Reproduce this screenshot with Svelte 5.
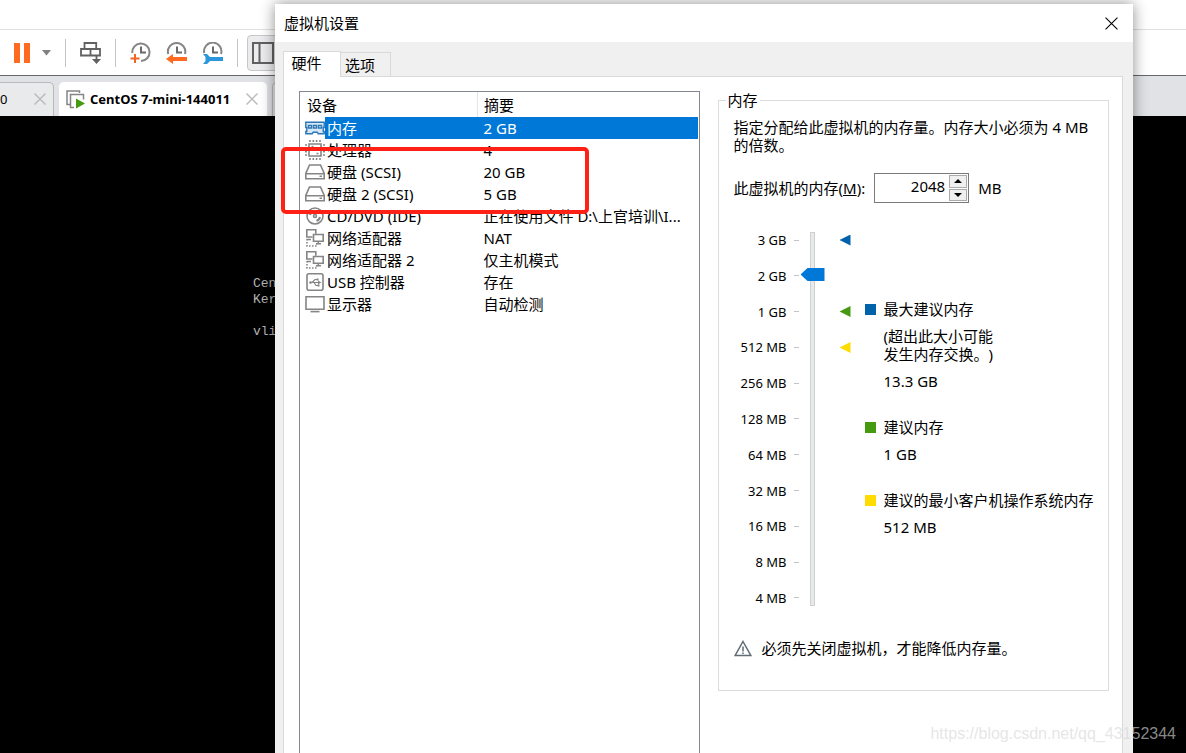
<script>
    const devices = [
        { icon: 'memory', name: '内存', summary: '2 GB' },
        { icon: 'cpu', name: '处理器', summary: '4' },
        { icon: 'disk', name: '硬盘 (SCSI)', summary: '20 GB' },
        { icon: 'disk', name: '硬盘 2 (SCSI)', summary: '5 GB' },
        { icon: 'cd', name: 'CD/DVD (IDE)', summary: '正在使用文件 D:\\上官培训\\I...' },
        { icon: 'network', name: '网络适配器', summary: 'NAT' },
        { icon: 'network', name: '网络适配器 2', summary: '仅主机模式' },
        { icon: 'usb', name: 'USB 控制器', summary: '存在' },
        { icon: 'display', name: '显示器', summary: '自动检测' }
    ];

    const scale = [
        { label: '3 GB', marker: 'blue' },
        { label: '2 GB' },
        { label: '1 GB', marker: 'green' },
        { label: '512 MB', marker: 'yellow' },
        { label: '256 MB' },
        { label: '128 MB' },
        { label: '64 MB' },
        { label: '32 MB' },
        { label: '16 MB' },
        { label: '8 MB' },
        { label: '4 MB' }
    ];

    let selected = $state(0);
    let memory = $state(2048);
    let level = $state(9);

    function step(amount) {
        memory = Math.max(4, memory + amount);
    }
</script>

{#snippet cross(size, stroke, width)}
    <svg width={size} height={size} viewBox="0 0 12 12" fill="none" stroke={stroke} stroke-width={width}>
        <path d="M.5 .5l11 11M11.5 .5l-11 11" />
    </svg>
{/snippet}

{#snippet clock(ring)}
    <path d={ring} stroke="#858585" stroke-width="2" fill="none" />
    <path d="M11 4.500v6h5" stroke="#6a6a6a" stroke-width="2" fill="none" />
{/snippet}

{#snippet deviceIcon(kind)}
    <svg width="20" height="20" viewBox="0 0 20 20" fill="none" stroke="#858585" stroke-width="1.600">
        {#if kind === 'memory'}
            <g stroke="#2d75b3" stroke-width="1.400">
                <path d="M.8 4.300h18.400v5.200h-1v4h1v2.200h-6l-1-1.500h-4l-1 1.500H.8v-2.200h1v-4h-1z" fill="#d5e8f7" />
                <path d="M3.500 7.500h3v2.500h-3zM8.500 7.500h3v2.500h-3zM13.500 7.500h3v2.500h-3z" fill="#fff" />
            </g>
        {:else if kind === 'cpu'}
            <path d="M4 4h12v12H4z" />
            <path d="M6.500 6.500h2M11.500 13.500h2" />
            <path d="M5 2V0M8.300 2V0M11.600 2V0M15 2V0M5 20v-2M8.300 20v-2M11.600 20v-2M15 20v-2M2 5H0M2 8.300H0M2 11.600H0M2 15H0M20 5h-2M20 8.300h-2M20 11.600h-2M20 15h-2" />
        {:else if kind === 'disk'}
            <path d="M4.500 3h11l3.700 8.500v5.200H.8v-5.200z" />
            <path d="M1 11.700h18M14.500 14.200h2.500" />
        {:else if kind === 'cd'}
            <circle cx="10" cy="10" r="8" />
            <circle cx="10" cy="10" r="1.500" />
            <path d="M5 9a5 5 0 0 1 3.500-3.800M15 11a5 5 0 0 1-3.500 3.800" stroke-width="2" />
        {:else if kind === 'network'}
            <path d="M7.500 9H1.800V1.800h9v4" />
            <path d="M8.500 6.500h9.700v6.700H8.500zM11 15.800h5M13.300 13.500v2M2 11.500h4" />
            <path d="M2 11v7h9.500v-2" stroke-dasharray="1.500 1.500" />
        {:else if kind === 'usb'}
            <rect x="2" y="1.800" width="16" height="16.400" rx="2" />
            <path d="M5 10.500h10M7 10.500l3-3h2M9 10.500l2 3h2" stroke-width="1.200" />
            <circle cx="5.500" cy="10.500" r="1.300" fill="#858585" stroke="none" />
            <path d="M13 8.500l3.300 2-3.300 2zM11.500 6.500h2v2h-2zM12.500 12.500h2v2h-2z" fill="#858585" stroke="none" />
        {:else}
            <path d="M1 2.800h18v12.400H1z" />
            <path d="M5.500 17.600h9" />
        {/if}
    </svg>
{/snippet}

<div class="desktop">
    <div class="menu-strip"></div>

    <div class="toolbar">
        <div class="power">
            <button aria-label="暂停">
                <svg width="16" height="20" viewBox="0 0 16 20"><path d="M0 0h6v20H0zM10 0h6v20h-6z" fill="#ff6a21" /></svg>
            </button>
            <button aria-label="电源选项">
                <svg width="9" height="6" viewBox="0 0 9 6"><path d="M0 0h9L4.500 5.500z" fill="#808080" /></svg>
            </button>
        </div>
        <span class="divider"></span>
        <button aria-label="发送按键">
            <svg width="21" height="22" viewBox="0 0 21 22" fill="none" stroke="#616161" stroke-width="1.800">
                <path d="M4.500 6.500V1h11.700v5.500M1 7h19v6.500H1zM10.500 7v6.500" />
                <path d="M16.500 13v6" />
                <path d="M12 17h9l-4.500 5z" fill="#616161" stroke="none" />
            </svg>
        </button>
        <span class="divider"></span>
        <div class="snapshots">
            <button aria-label="拍摄快照">
                <svg width="21" height="22" viewBox="0 0 21 22">
                    {@render clock('M2.200 11A8.700 8.700 0 1 1 11 19')}
                    <path d="M5 12v9M.5 16.500h9" stroke="#f26522" stroke-width="2" />
                </svg>
            </button>
            <button aria-label="恢复快照">
                <svg width="21" height="22" viewBox="0 0 21 22">
                    {@render clock('M2.200 12A8.700 8.700 0 1 1 19 12')}
                    <path d="M0 17l7-5v3h14v4H7v3z" fill="#ff6a21" />
                </svg>
            </button>
            <button aria-label="管理快照">
                <svg width="21" height="22" viewBox="0 0 21 22">
                    {@render clock('M2.200 11A8.700 8.700 0 1 1 19 12')}
                    <path d="M1 12h4l3 3h13v4H8l-3 3H1l2.500-3v-4z" fill="#2b96dc" />
                </svg>
            </button>
        </div>
        <span class="divider"></span>
        <button class="pressed" aria-label="显示库">
            <svg width="22" height="22" viewBox="0 0 22 22" fill="none" stroke="#616161" stroke-width="2">
                <path d="M1 1h20v20H1zM7.500 1v20" />
            </svg>
        </button>
    </div>

    <div class="vm-tabs">
        <div class="vm-tab first">
            <span>0</span>
            <button aria-label="关闭">{@render cross(12, '#bcbcbc', 1.5)}</button>
        </div>
        <div class="vm-tab active">
            <svg width="19" height="19" viewBox="0 0 19 19" fill="none" stroke="#858585" stroke-width="1.500">
                <path d="M4 14.500H1V1h12.500v2" />
                <path d="M8 17.500H4.500v-13h13v5" />
                <path d="M10 8.500l9 5-9 5z" fill="#459a12" stroke="none" />
            </svg>
            <strong>CentOS 7-mini-144011</strong>
            <button aria-label="关闭">{@render cross(12, '#bcbcbc', 1.5)}</button>
        </div>
        <div class="vm-tab next"></div>
    </div>

    <pre class="console">Cen
Ker

vli</pre>

    <div class="dialog" role="dialog" aria-labelledby="dialog-title">
        <header>
            <h1 id="dialog-title">虚拟机设置</h1>
            <button aria-label="关闭">{@render cross(13, '#000', 1)}</button>
        </header>

        <div class="tabs" role="tablist">
            <button class="tab current" role="tab" aria-selected="true">硬件</button>
            <button class="tab" role="tab" aria-selected="false">选项</button>
        </div>

        <div class="page">
            <div class="device-list">
                <table>
                    <thead>
                        <tr><th class="device-col">设备</th><th>摘要</th></tr>
                    </thead>
                    <tbody>
                        {#each devices as device, i}
                            <tr class:selected={i === selected} onclick={() => (selected = i)}>
                                <td>
                                    <div class="device">
                                        {@render deviceIcon(device.icon)}
                                        <span class="device-name">{device.name}</span>
                                    </div>
                                </td>
                                <td class="summary">{device.summary}</td>
                            </tr>
                        {/each}
                    </tbody>
                </table>
                <div class="highlight"></div>
            </div>

            <fieldset>
                <legend>内存</legend>
                <p>指定分配给此虚拟机的内存量。内存大小必须为 4 MB 的倍数。</p>

                <div class="memory-row">
                    <label for="memory">此虚拟机的内存(<u>M</u>):</label>
                    <div class="spinner">
                        <input id="memory" type="text" inputmode="numeric" bind:value={memory} />
                        <div class="spin-buttons">
                            <button aria-label="增加" onclick={() => step(4)}>
                                <svg width="8" height="4" viewBox="0 0 8 4"><path d="M0 4l4-4 4 4z" /></svg>
                            </button>
                            <button aria-label="减少" onclick={() => step(-4)}>
                                <svg width="8" height="4" viewBox="0 0 8 4"><path d="M0 0l4 4 4-4z" /></svg>
                            </button>
                        </div>
                    </div>
                    <span>MB</span>
                </div>

                <div class="memory-scale">
                    <div class="labels">
                        {#each scale as mark}
                            <span class="mark">{mark.label}</span>
                        {/each}
                    </div>
                    <input class="slider" type="range" min="0" max="10" bind:value={level} aria-label="内存" />
                    <div class="markers">
                        {#each scale as mark}
                            <span class="marker {mark.marker ?? ''}"></span>
                        {/each}
                    </div>
                    <dl>
                        <dt class="blue">最大建议内存</dt>
                        <dd>(超出此大小可能<br />发生内存交换。)</dd>
                        <dd>13.3 GB</dd>
                        <dt class="green">建议内存</dt>
                        <dd>1 GB</dd>
                        <dt class="yellow">建议的最小客户机操作系统内存</dt>
                        <dd>512 MB</dd>
                    </dl>
                </div>

                <div class="note">
                    <svg width="18" height="17" viewBox="0 0 18 17" fill="none" stroke="#5f6b76" stroke-width="1.500">
                        <path d="M9 1.500L16.800 15.500H1.200z" />
                        <path d="M9 6.500v5M9 12.500v1.500" />
                    </svg>
                    <span>必须先关闭虚拟机，才能降低内存量。</span>
                </div>
            </fieldset>
        </div>
    </div>

    <div class="watermark">https://blog.csdn.net/qq_43152344</div>
</div>

<style>
    :global(body) {
        margin: 0;
    }

    .desktop {
        position: relative;
        display: flex;
        flex-direction: column;
        height: 100vh;
        overflow: hidden;
        background: #000;
        color: #000;
        font: 15px/18px "Noto Sans", "Noto Sans CJK SC", sans-serif;
        text-spacing-trim: space-all;
    }

    button {
        display: flex;
        align-items: center;
        justify-content: center;
        padding: 0;
        border: 0;
        background: none;
        color: inherit;
        font: inherit;
    }

    svg {
        display: block;
        flex-shrink: 0;
    }

    .menu-strip {
        height: 29px;
        border-bottom: 1px solid #e0e0e0;
        background: #fff;
    }

    .toolbar {
        display: flex;
        align-items: center;
        gap: 14px;
        height: 45px;
        padding-left: 14px;
        border-bottom: 1px solid #68666c;
        background: #fff;
    }

    .power {
        display: flex;
        align-items: center;
        gap: 12px;
    }

    .snapshots {
        display: flex;
        gap: 15px;
    }

    .divider {
        width: 1px;
        height: 28px;
        background: #c4c4c4;
    }

    .pressed {
        width: 32px;
        height: 36px;
        margin-left: -5px;
        border: 1px solid #c8c8c8;
        border-radius: 4px;
        background: #ececee;
    }

    .vm-tabs {
        display: flex;
        align-items: flex-end;
        gap: 5px;
        height: 40px;
        background: #e1e2e5;
    }

    .vm-tab {
        display: flex;
        box-sizing: border-box;
        align-items: center;
        height: 34px;
        padding-bottom: 1px;
        border: 1px solid #b9b9bb;
        border-bottom: 0;
        border-radius: 5px 5px 0 0;
        background: #e9eaec;
        font-size: 13px;
    }

    .vm-tab.first {
        justify-content: space-between;
        width: 54px;
        padding-right: 7px;
        border-left: 0;
        border-top-left-radius: 0;
    }

    .vm-tab.active {
        width: 208px;
        padding: 0 8px 1px 6px;
        border-color: #fff;
        background: #fff;
    }

    .vm-tab.active strong {
        flex: 1;
        margin-left: 5px;
        white-space: nowrap;
    }

    .vm-tab.next {
        width: 60px;
    }

    .console {
        margin: 0;
        padding: 160px 0 0 253px;
        color: #b4b4b4;
        font: 13px/16px "Liberation Mono", monospace;
    }

    .dialog {
        position: absolute;
        top: 4px;
        right: 53px;
        bottom: 0;
        left: 275px;
        display: flex;
        flex-direction: column;
        background: #f0f0f0;
        box-shadow: 0 0 14px rgba(0, 0, 0, 0.45);
    }

    header {
        display: flex;
        align-items: center;
        justify-content: space-between;
        height: 38px;
        padding: 0 15px 0 9px;
        background: #fff;
    }

    h1 {
        margin: 0;
        font-size: 15px;
        font-weight: 400;
    }

    .tabs {
        display: flex;
        align-items: flex-end;
        height: 34px;
        padding-left: 8px;
    }

    .tab {
        box-sizing: border-box;
        width: 50px;
        height: 24px;
        padding-right: 11px;
        border: 1px solid #d9d9d9;
        border-width: 1px 1px 0 0;
    }

    .tab.current {
        z-index: 1;
        width: 58px;
        height: 26px;
        margin-bottom: -1px;
        padding-bottom: 3px;
        border-left-width: 1px;
        background: #fff;
    }

    .page {
        display: flex;
        flex: 1;
        gap: 18px;
        margin: 0 10px 0 8px;
        padding: 14px 13px 0 15px;
        border: 1px solid #d9d9d9;
        border-bottom: 0;
        background: #fff;
    }

    .device-list,
    fieldset {
        box-sizing: border-box;
        min-width: 0;
    }

    .device-list {
        position: relative;
        flex: 1 1 400px;
        padding-right: 1px;
        border: 1px solid #828790;
        border-bottom: 0;
    }

    table {
        width: 100%;
        border-collapse: collapse;
        table-layout: fixed;
    }

    th {
        height: 25px;
        padding: 0 0 0 7px;
        font-weight: 400;
        text-align: left;
    }

    .device-col {
        width: 170px;
        border-right: 1px solid #e5e5e5;
    }

    td {
        height: 22px;
        padding: 0;
        white-space: nowrap;
    }

    .device {
        display: flex;
        align-items: center;
        padding-left: 5px;
    }

    .device-name {
        flex: 1;
        padding-left: 2px;
        line-height: 22px;
    }

    th + th,
    .summary {
        padding-left: 6px;
    }

    .summary {
        overflow: hidden;
    }

    .selected .device-name,
    .selected .summary {
        background: #0078d7;
        color: #fff;
    }

    .highlight {
        position: absolute;
        top: 55px;
        left: -19px;
        width: 300px;
        height: 59px;
        border: 4px solid #ff2016;
        border-radius: 5px;
        pointer-events: none;
    }

    fieldset {
        flex: 1 1 391px;
        align-self: flex-start;
        margin: 0;
        padding: 9px 13px 33px 15px;
        border: 1px solid #dcdcdc;
    }

    legend {
        margin-left: -8px;
        padding: 0 2px;
    }

    p {
        margin: 0;
    }

    .memory-row {
        display: flex;
        align-items: center;
        gap: 9px;
        margin-top: 19px;
    }

    .spinner {
        display: flex;
        box-sizing: border-box;
        width: 95px;
        height: 30px;
        border: 1px solid #7a7a7a;
    }

    .spinner input {
        flex: 1;
        min-width: 0;
        padding: 0 3px 4px 0;
        border: 0;
        outline: 0;
        font: inherit;
        text-align: right;
    }

    .spin-buttons {
        display: flex;
        flex-direction: column;
        gap: 1px;
        padding: 1px;
    }

    .spin-buttons button {
        flex: 1;
        width: 18px;
        border: 1px solid #ababab;
        background: #f0f0f0;
    }

    .memory-scale {
        display: flex;
        height: 376px;
        margin-top: 28px;
    }

    .labels,
    .markers {
        display: flex;
        flex-direction: column;
        justify-content: space-between;
    }

    .labels {
        width: 65px;
    }

    .mark {
        display: flex;
        align-items: center;
        justify-content: flex-end;
        gap: 7px;
        font-size: 13px;
        white-space: nowrap;
    }

    .mark::after {
        width: 5px;
        height: 1px;
        background: #c4c4c4;
        content: "";
    }

    .slider {
        width: 24px;
        height: 374px;
        margin: 1px 0 0 2px;
        background: linear-gradient(#e7eaea, #e7eaea) center / 3px 372px no-repeat,
            linear-gradient(#d0d0d0, #d0d0d0) center / 5px 374px no-repeat;
        appearance: none;
        direction: rtl;
        writing-mode: vertical-lr;
    }

    .slider::-webkit-slider-thumb {
        width: 24px;
        height: 13px;
        background: #0078d7;
        appearance: none;
        clip-path: polygon(0 50%, 7px 0, 100% 0, 100% 100%, 7px 100%);
    }

    .markers {
        margin-left: 15px;
    }

    .marker {
        display: flex;
        align-items: center;
        width: 11px;
        height: 18px;
    }

    .marker::before {
        width: 11px;
        height: 11px;
        clip-path: polygon(0 50%, 100% 0, 100% 100%);
        content: "";
    }

    .marker.blue::before,
    dt.blue::before {
        background: #0063a9;
    }

    .marker.green::before,
    dt.green::before {
        background: #459a12;
    }

    .marker.yellow::before,
    dt.yellow::before {
        background: #ffdc00;
    }

    dl {
        margin: 69px 0 0 14px;
        white-space: nowrap;
    }

    dt {
        display: flex;
        align-items: center;
        gap: 8px;
    }

    dt::before {
        width: 11px;
        height: 11px;
        content: "";
    }

    dd {
        margin: 9px 0 0 19px;
    }

    dd + dt {
        margin-top: 28px;
    }

    .note {
        display: flex;
        align-items: center;
        gap: 10px;
        margin-top: 32px;
    }

    .watermark {
        position: absolute;
        right: 10px;
        bottom: 9px;
        color: rgba(215, 215, 215, 0.65);
        font: 16px/20px "Liberation Sans", sans-serif;
    }
</style>
